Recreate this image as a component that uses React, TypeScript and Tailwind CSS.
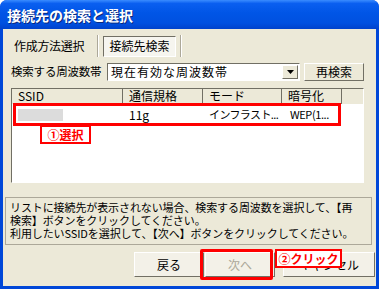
const jp = "font-['MS_UI_Gothic','Noto_Sans_CJK_JP',sans-serif]"

type Row = { ssid: string; standard: string; mode: string; enc: string }

const rows: Row[] = [{ ssid: "", standard: "11g", mode: "インフラスト...", enc: "WEP(1..." }]

function Btn({ label, disabled }: { label: string; disabled?: boolean }) {
  return (
    <div
      className={`flex h-[25px] w-[70px] items-center justify-center border border-t-white border-l-white border-b-[#716F64] border-r-[#716F64] bg-[#F3F1E8] text-[12px] ${disabled ? "text-[#ACA899]" : "text-black"}`}
    >
      {label}
    </div>
  )
}

export default function App() {
  return (
    <div className={`relative h-[289px] w-[379px] overflow-hidden rounded-t-[7px] bg-[#0047D8] ${jp} text-[12px] leading-none text-black`}>
      {/* title bar */}
      <div className="flex h-[29px] items-center bg-[linear-gradient(#3A8CFF_0%,#0A5FF0_12%,#0055E6_45%,#0050E0_80%,#0042CC_100%)] pl-[7px]">
        <span className="text-[14px] font-bold text-white [text-shadow:1px_1px_0_#0A2A80]">接続先の検索と選択</span>
      </div>

      <div className="mx-[3px] flex h-[257px] flex-col bg-[#ECE9D8] pr-[1px]">
        {/* tabs */}
        <div className="mt-[6px] flex h-[22px] items-center pl-[11px]">
          <span className="w-[83px] text-[12px] tracking-[-0.3px]">作成方法選択</span>
          <div className="mr-[4px] h-[22px] w-[2px] border-l border-l-[#ACA899] border-r border-r-white" />
          <div className="flex h-[21px] w-[73px] items-center justify-center border border-t-[#716F64] border-l-[#716F64] border-b-white border-r-white bg-[#F6F5EF]">
            接続先検索
          </div>
          <div className="ml-[4px] h-[22px] w-[2px] border-l border-l-[#ACA899] border-r border-r-white" />
        </div>

        {/* frequency row */}
        <div className="mt-[6px] flex h-[18px] items-center pl-[8px]">
          <span className="w-[96px] whitespace-nowrap text-[11.5px] tracking-[-0.2px]">検索する周波数帯</span>
          <div className="flex h-[18px] w-[193px] items-center border border-t-[#716F64] border-l-[#716F64] border-b-white border-r-white bg-white">
            <span className="flex-1 whitespace-nowrap pl-[3px] tracking-[1px]">現在有効な周波数帯</span>
            <div className="mr-[1px] flex h-[14px] w-[16px] items-center justify-center border border-t-white border-l-white border-b-[#716F64] border-r-[#716F64] bg-[#ECE9D8]">
              <svg width="7" height="4" viewBox="0 0 7 4"><path d="M0 0h7L3.5 4z" fill="#000" /></svg>
            </div>
          </div>
          <div className="ml-[4px] flex h-[18px] w-[60px] items-center justify-center border border-t-white border-l-white border-b-[#716F64] border-r-[#716F64] bg-[#ECE9D8]">
            再検索
          </div>
        </div>

        {/* list */}
        <div className="relative ml-[8px] mt-[7px] h-[95px] w-[353px] border border-t-[#716F64] border-l-[#716F64] border-b-white border-r-white bg-white">
          <div className="flex h-[15px] bg-[#ECE9D8]">
            <div className="w-[111px] border-r border-r-[#716F64] pl-[6px] pt-[1px]">SSID</div>
            <div className="w-[80px] border-r border-r-[#716F64] pl-[6px] pt-[1px]">通信規格</div>
            <div className="w-[79px] border-r border-r-[#716F64] pl-[6px] pt-[1px]">モード</div>
            <div className="w-[60px] border-r border-r-[#716F64] pl-[6px] pt-[1px]">暗号化</div>
            <div className="flex-1" />
          </div>
          {rows.map((r) => (
            <div key={r.standard} className="flex h-[21px] items-center whitespace-nowrap">
              <div className="w-[111px] pl-[6px]">
                <div className="h-[12px] w-[45px] bg-[#DCDCDC]" />
              </div>
              <div className="w-[80px] pl-[6px]">{r.standard}</div>
              <div className="w-[79px] pl-[6px] text-[11px] tracking-[-0.6px]">{r.mode}</div>
              <div className="w-[60px] pl-[8px] text-[11px] tracking-[-0.4px]">{r.enc}</div>
            </div>
          ))}
          {/* annotation: selected row */}
          <div className="pointer-events-none absolute left-[1px] top-[14px] h-[23px] w-[328px] border-[3px] border-[#FF0000]" />
          <div className="absolute left-[28px] top-[36px] flex h-[19px] w-[51px] items-center justify-center border-[2px] border-[#FF0000] bg-white text-[12px] font-bold text-[#FF0000]">
            ①選択
          </div>
        </div>

        {/* message */}
        <div className="ml-[2px] mt-[14px] h-[48px] w-[367px] whitespace-nowrap border border-[#ACA899] px-[4px] pt-[3px] text-[11px] leading-[13px] tracking-[-0.1px]">
          リストに接続先が表示されない場合、検索する周波数を選択して、【再
          <br />
          検索】ボタンをクリックしてください。
          <br />
          利用したいSSIDを選択して、【次へ】ボタンをクリックしてください。
        </div>

        {/* buttons */}
        <div className="relative mt-[7px] flex h-[25px] pl-[131px]">
          <Btn label="戻る" />
          <div className="ml-[1px]">
            <Btn label="次へ" disabled />
          </div>
          <div className="ml-[8px]">
            <div className="flex h-[25px] w-[92px] items-center justify-center border border-t-white border-l-white border-b-[#716F64] border-r-[#716F64] bg-[#F3F1E8]">
              キャンセル
            </div>
          </div>
          <div className="pointer-events-none absolute left-[197px] top-[-3px] h-[31px] w-[73px] rounded-[2px] border-[3px] border-[#FF0000]" />
          <div className="absolute left-[272px] top-[-3px] flex h-[19px] w-[67px] items-center justify-center border-[2px] border-[#FF0000] bg-white text-[12px] font-bold text-[#FF0000]">
            ②クリック
          </div>
        </div>
      </div>
    </div>
  )
}
